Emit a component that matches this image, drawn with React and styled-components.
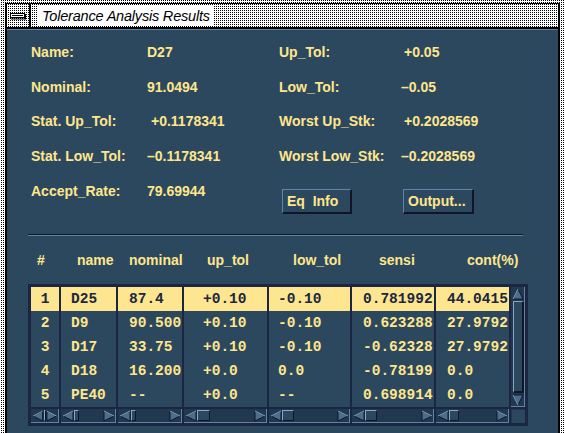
import React from "react";
import styled, { createGlobalStyle } from "styled-components";

const c = {
  panel: "#2c485e",
  frame: "#1b2642",
  trough: "#22384e",
  text: "#ffe68c",
  select: "#fde68f",
  selectText: "#1b2642",
  light: "#5f84a6",
  arrow: "#4c6e8e",
  arrowLight: "#86a8c6",
  dark: "#0e1627",
};

const dots = "conic-gradient(#000 0 25%, #fff 0 100%) 0 0 / 2px 2px";

const GlobalStyle = createGlobalStyle`
  html, body {
    margin: 0;
    width: 565px;
    height: 433px;
    overflow: hidden;
    background: ${dots};
  }
`;

const Page = styled.div`
  padding: 3px 5px 0 5px;
  height: 433px;
  box-sizing: border-box;
`;

const Window = styled.div`
  width: 555px;
  height: 430px;
  box-sizing: border-box;
  border-left: 2px solid #000;
  border-right: 2px solid #000;
  display: flex;
  flex-direction: column;
`;

const TitleBar = styled.div`
  height: 26px;
  box-sizing: border-box;
  border-top: 1px solid #000;
  border-bottom: 2px solid #000;
  background: ${dots};
  display: flex;
  align-items: stretch;
`;

const MenuButton = styled.div`
  width: 22px;
  border-right: 2px solid #000;
  display: flex;
  align-items: center;
  justify-content: center;
`;

const TitleText = styled.div`
  margin: 1px 0 1px 7px;
  padding: 0 4px;
  background: #fff;
  display: flex;
  align-items: center;
  font-family: "Liberation Sans", Arial, sans-serif;
  font-style: italic;
  font-size: 14.5px;
  color: #000;
  letter-spacing: -0.2px;
`;

const Content = styled.div`
  flex: 1;
  background: ${c.panel};
  border-top: 1px solid ${c.light};
  font-family: "Liberation Sans", Arial, sans-serif;
  font-weight: bold;
  font-size: 14px;
  color: ${c.text};
`;

const Info = styled.div`
  display: flex;
  padding: 4.6px 0 0 24px;
`;

const Block = styled.div`
  width: ${(p) => p.$width}px;
  display: flex;
  flex-direction: column;
`;

const Field = styled.div`
  display: grid;
  grid-template-columns: ${(p) => p.$label}px 1fr;
  align-items: center;
  height: 34.75px;
  white-space: nowrap;
`;

const Value = styled.span`
  padding-left: ${(p) => p.$shift || 0}px;
`;

const ButtonRow = styled.div`
  display: flex;
  gap: 51px;
  margin: 15.4px 0 0 3px;
`;

const Button = styled.div`
  width: ${(p) => p.$width}px;
  height: 25px;
  box-sizing: border-box;
  border-top: 1px solid ${c.light};
  border-left: 1px solid ${c.light};
  border-right: 2px solid ${c.dark};
  border-bottom: 2px solid ${c.dark};
  display: flex;
  align-items: center;
  padding-left: 4px;
  white-space: pre;
`;

const Separator = styled.div`
  margin: 20px 0 0 21px;
  width: 495px;
  border-top: 1px solid ${c.dark};
  border-bottom: 1px solid ${c.light};
`;

const widths = [28, 55, 64, 83, 81, 82, 73];
const template = widths.map((w) => `${w}px`).join(" ");

const HeaderRow = styled.div`
  display: grid;
  grid-template-columns: ${template};
  column-gap: 2px;
  height: 24px;
  align-items: center;
  margin: 12px 0 12px 24px;
  white-space: nowrap;
`;

const HeaderCell = styled.div`
  padding-left: ${(p) => p.$pad}px;
`;

const Table = styled.div`
  margin-left: 21px;
  width: 500px;
  box-sizing: border-box;
  padding: 3px;
  background: ${c.frame};
  display: grid;
  grid-template-columns: ${template} 14px;
  grid-template-rows: 120px 14px;
  gap: 2px;
`;

const List = styled.div`
  background: ${c.panel};
  display: flex;
  flex-direction: column;
  overflow: hidden;
`;

const Cell = styled.div`
  height: 24px;
  flex: none;
  display: flex;
  align-items: center;
  justify-content: ${(p) => (p.$center ? "center" : "flex-start")};
  padding-left: ${(p) => p.$pad}px;
  background: ${(p) => (p.$selected ? c.select : "transparent")};
  color: ${(p) => (p.$selected ? c.selectText : c.text)};
  font-family: "Liberation Mono", "Courier New", monospace;
  font-weight: bold;
  font-size: 14.5px;
  white-space: nowrap;
`;

const HScroll = styled.div`
  display: flex;
  align-items: center;
  background: ${c.trough};
  box-shadow: inset -1px -1px 0 ${c.light};
  padding: 0 1px;
`;

const Thumb = styled.div`
  width: ${(p) => p.$w}px;
  height: 11px;
  box-sizing: border-box;
  border-top: 1px solid ${c.arrowLight};
  border-left: 1px solid ${c.arrowLight};
  border-right: 1px solid ${c.dark};
  border-bottom: 1px solid ${c.dark};
  background: ${c.panel};
  margin-right: auto;
`;

const VScroll = styled.div`
  display: flex;
  flex-direction: column;
  align-items: center;
  background: ${c.trough};
  box-shadow: inset -1px -1px 0 ${c.light};
  padding: 1px 0;
`;

const VThumb = styled.div`
  flex: 1;
  width: 11px;
  margin: 1px 0;
  box-sizing: border-box;
  border-top: 1px solid ${c.arrowLight};
  border-left: 1px solid ${c.arrowLight};
  border-right: 2px solid ${c.dark};
  border-bottom: 2px solid ${c.dark};
  background: ${c.panel};
`;

const Corner = styled.div`
  background: ${c.panel};
  box-shadow: inset 1px 1px 0 ${c.trough};
`;

const arrowPoints = {
  left: "11,1 1,6 11,11",
  right: "1,1 11,6 1,11",
  up: "1,11 6,1 11,11",
  down: "1,1 6,11 11,1",
};

const Arrow = ({ dir }) => (
  <svg width="12" height="12" viewBox="0 0 12 12">
    <polygon points={arrowPoints[dir]} fill={c.arrow} stroke={c.dark} strokeWidth="1" />
    <polyline
      points={arrowPoints[dir].split(" ").slice(0, 2).join(" ")}
      fill="none"
      stroke={c.arrowLight}
      strokeWidth="1"
    />
  </svg>
);

const MenuIcon = () => (
  <svg width="16" height="8" viewBox="0 0 16 8">
    <rect x="0.5" y="1.5" width="14" height="4" fill="#fff" stroke="#000" />
    <line x1="2" y1="3.5" x2="13" y2="3.5" stroke="#000" />
    <line x1="1" y1="7" x2="16" y2="7" stroke="#000" />
    <line x1="15.5" y1="2" x2="15.5" y2="7" stroke="#000" />
  </svg>
);

const leftFields = [
  { label: "Name:", value: "D27" },
  { label: "Nominal:", value: "91.0494" },
  { label: "Stat. Up_Tol:", value: "+0.1178341", shift: 4 },
  { label: "Stat. Low_Tol:", value: "–0.1178341" },
  { label: "Accept_Rate:", value: "79.69944" },
];

const rightFields = [
  { label: "Up_Tol:", value: "+0.05", shift: 3 },
  { label: "Low_Tol:", value: "–0.05" },
  { label: "Worst Up_Stk:", value: "+0.2028569", shift: 3 },
  { label: "Worst Low_Stk:", value: "–0.2028569" },
];

const columns = [
  { head: "#", headPad: 6, pad: 0, center: true, thumb: 3, cells: ["1", "2", "3", "4", "5"] },
  { head: "name", headPad: 16, pad: 10, thumb: 5, cells: ["D25", "D9", "D17", "D18", "PE40"] },
  { head: "nominal", headPad: 11, pad: 11, thumb: 5, cells: ["87.4", "90.500", "33.75", "16.200", "--"] },
  { head: "up_tol", headPad: 23, pad: 19, thumb: 13, cells: ["+0.10", "+0.10", "+0.10", "+0.0", "+0.0"] },
  { head: "low_tol", headPad: 24, pad: 9, thumb: 12, cells: ["-0.10", "-0.10", "-0.10", "0.0", "--"] },
  { head: "sensi", headPad: 27, pad: 11, thumb: 12, cells: ["0.781992", "0.623288", "-0.62328", "-0.78199", "0.698914"] },
  { head: "cont(%)", headPad: 31, pad: 11, thumb: 10, cells: ["44.0415", "27.9792", "27.9792", "0.0", "0.0"] },
];

const selectedRow = 0;

const App = () => {
  return (
    <Page>
      <GlobalStyle />
      <Window>
        <TitleBar>
          <MenuButton>
            <MenuIcon />
          </MenuButton>
          <TitleText>Tolerance Analysis Results</TitleText>
        </TitleBar>

        <Content>
          <Info>
            <Block $width={248}>
              {leftFields.map((f) => (
                <Field key={f.label} $label={116}>
                  <span>{f.label}</span>
                  <Value $shift={f.shift}>{f.value}</Value>
                </Field>
              ))}
            </Block>
            <Block $width={250}>
              {rightFields.map((f) => (
                <Field key={f.label} $label={122}>
                  <span>{f.label}</span>
                  <Value $shift={f.shift}>{f.value}</Value>
                </Field>
              ))}
              <ButtonRow>
                <Button $width={70}>{"Eq  Info"}</Button>
                <Button $width={71}>Output...</Button>
              </ButtonRow>
            </Block>
          </Info>

          <Separator />

          <HeaderRow>
            {columns.map((col) => (
              <HeaderCell key={col.head} $pad={col.headPad}>
                {col.head}
              </HeaderCell>
            ))}
          </HeaderRow>

          <Table>
            {columns.map((col) => (
              <List key={col.head}>
                {col.cells.map((v, i) => (
                  <Cell key={i} $pad={col.pad} $center={col.center} $selected={i === selectedRow}>
                    {v}
                  </Cell>
                ))}
              </List>
            ))}
            <VScroll>
              <Arrow dir="up" />
              <VThumb />
              <Arrow dir="down" />
            </VScroll>
            {columns.map((col) => (
              <HScroll key={col.head}>
                <Arrow dir="left" />
                <Thumb $w={col.thumb} />
                <Arrow dir="right" />
              </HScroll>
            ))}
            <Corner />
          </Table>
        </Content>
      </Window>
    </Page>
  );
};

export default App;
